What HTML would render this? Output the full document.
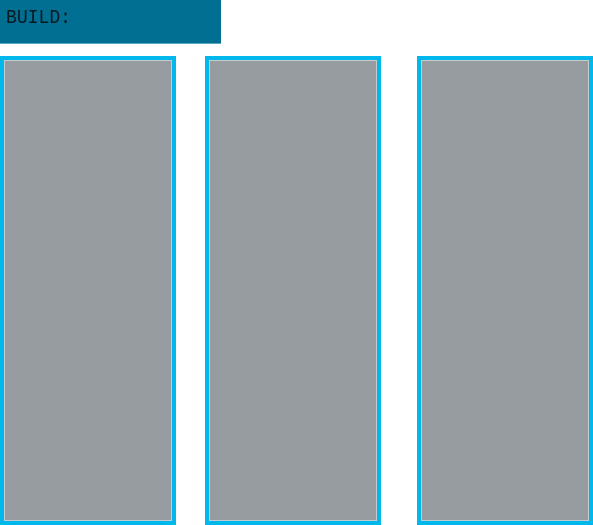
<!DOCTYPE html>
<html><head><style>
body{margin:0;width:593px;height:525px;background:#fff;position:relative;overflow:hidden;font-family:"Liberation Mono",monospace}
.hdr{position:absolute;left:0;top:0;width:221px;height:44px;background:#006f91;border-bottom:1px solid #5aa9c2;box-sizing:border-box}
.hdr span{position:absolute;left:6px;top:7px;font-size:19px;color:#061820;letter-spacing:0px;font-weight:normal;transform:scaleX(0.95);transform-origin:left}
.p{position:absolute;top:56px;width:176px;height:469px;background:#00b8ec;box-sizing:border-box;padding:4px}
.p div{width:100%;height:100%;background:#969c9f;border:1px solid #c4ccd0;box-sizing:border-box}
</style></head><body>
<div class="hdr"><span>BUILD:</span></div>
<div class="p" style="left:0"><div></div></div>
<div class="p" style="left:205px"><div></div></div>
<div class="p" style="left:417px"><div></div></div>
</body></html>
